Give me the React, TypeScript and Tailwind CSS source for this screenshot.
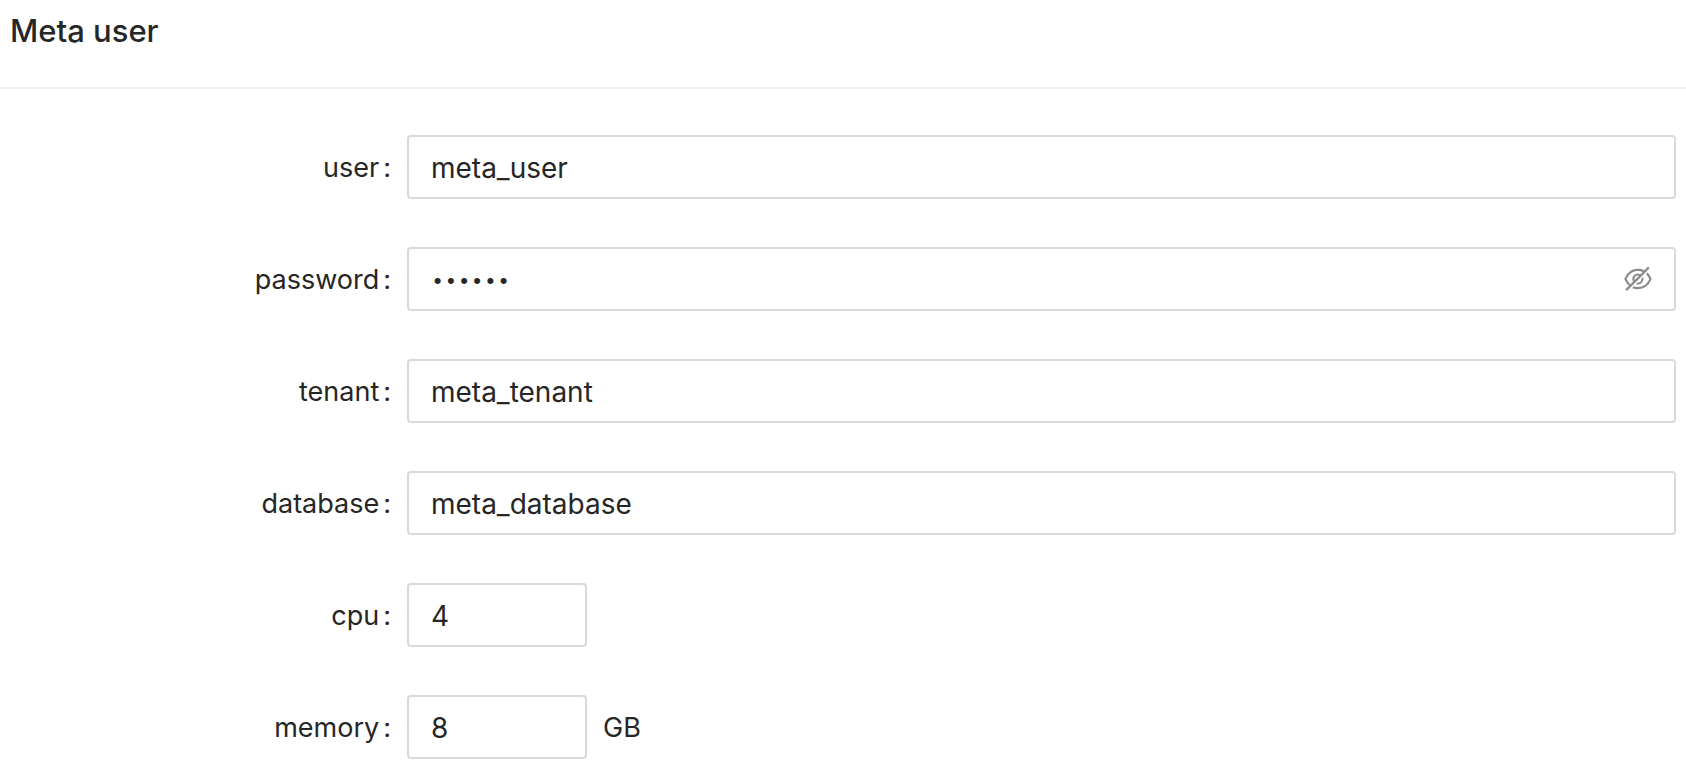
import { useState } from "react";
import type { ReactNode } from "react";
import { AiOutlineEye, AiOutlineEyeInvisible } from "react-icons/ai";

const boxClass =
  "h-16 rounded border-2 border-[#d9d9d9] bg-white px-[22px] pt-0.5 text-[28px] outline-none focus:border-[#40a9ff]";

function FormRow({ id, label, children }: { id: string; label: string; children: ReactNode }) {
  return (
    <div className="flex items-center">
      <label htmlFor={id} className="flex w-[407px] shrink-0 justify-end gap-1 pt-0.5 pr-4">
        <span>{label}</span>
        <span>:</span>
      </label>
      <div className="flex min-w-0 flex-1 items-center">{children}</div>
    </div>
  );
}

function TextRow({ name, value }: { name: string; value: string }) {
  return (
    <FormRow id={name} label={name}>
      <input id={name} type="text" defaultValue={value} className={`${boxClass} w-full`} />
    </FormRow>
  );
}

function PasswordRow() {
  const [visible, setVisible] = useState(false);
  return (
    <FormRow id="password" label="password">
      <div className="flex h-16 w-full items-center rounded border-2 border-[#d9d9d9] bg-white pr-5 pl-[22px] focus-within:border-[#40a9ff]">
        <input
          id="password"
          type={visible ? "text" : "password"}
          defaultValue="secret"
          className={
            visible
              ? "min-w-0 flex-1 bg-transparent pt-0.5 text-[28px] outline-none"
              : "min-w-0 flex-1 bg-transparent pt-2 font-['Liberation_Mono',monospace] text-[22px] outline-none"
          }
        />
        <button
          type="button"
          aria-label={visible ? "Hide password" : "Show password"}
          onClick={() => setVisible(!visible)}
          className="cursor-pointer text-[#8c8c8c]"
        >
          {visible ? <AiOutlineEye className="size-8" /> : <AiOutlineEyeInvisible className="size-8" />}
        </button>
      </div>
    </FormRow>
  );
}

export default function App() {
  return (
    <main className="min-h-screen bg-white font-['Inter',sans-serif] text-[27px] leading-10 text-[#262626]">
      <header className="border-b-2 border-[#f0f0f0] px-2.5 pt-[11px] pb-9">
        <h1 className="text-[31px] leading-10 font-medium">Meta user</h1>
      </header>
      <form className="flex flex-col gap-12 pt-[46px] pr-2.5">
        <TextRow name="user" value="meta_user" />
        <PasswordRow />
        <TextRow name="tenant" value="meta_tenant" />
        <TextRow name="database" value="meta_database" />
        <FormRow id="cpu" label="cpu">
          <input id="cpu" type="text" inputMode="numeric" defaultValue="4" className={`${boxClass} w-[180px]`} />
        </FormRow>
        <FormRow id="memory" label="memory">
          <input id="memory" type="text" inputMode="numeric" defaultValue="8" className={`${boxClass} w-[180px]`} />
          <span className="ml-4 pt-0.5">GB</span>
        </FormRow>
      </form>
    </main>
  );
}
